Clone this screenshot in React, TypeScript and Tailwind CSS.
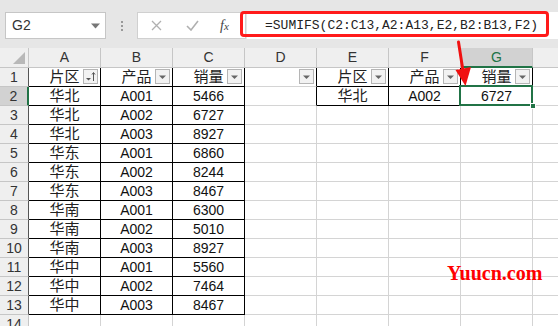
import React from 'react'

const COLS = ['A', 'B', 'C', 'D', 'E', 'F', 'G', '']

const rows: string[][] = [
  ['片区', '产品', '销量', '', '片区', '产品', '销量'],
  ['华北', 'A001', '5466', '', '华北', 'A002', '6727'],
  ['华北', 'A002', '6727'],
  ['华北', 'A003', '8927'],
  ['华东', 'A001', '6860'],
  ['华东', 'A002', '8244'],
  ['华东', 'A003', '8467'],
  ['华南', 'A001', '6300'],
  ['华南', 'A002', '5010'],
  ['华南', 'A003', '8927'],
  ['华中', 'A001', '5560'],
  ['华中', 'A002', '7464'],
  ['华中', 'A003', '8467'],
  [],
  [],
]

const inTable = (r: number, c: number) =>
  (r >= 1 && r <= 13 && c <= 2) || (r >= 1 && r <= 2 && c >= 4 && c <= 6)

function FilterButton({ sorted }: { sorted?: boolean }) {
  return (
    <div className="absolute right-[2px] top-[1px] flex h-[15px] w-[15px] items-center justify-center border border-[#b5b5b5] bg-[#f2f2f2]">
      {sorted ? (
        <svg width="13" height="13" viewBox="0 0 13 13">
          <path d="M2 8h5l-2.5 2.5z" fill="#555" />
          <path d="M9.5 11V3M8 4.5l1.5-2 1.5 2" stroke="#555" strokeWidth="1" fill="none" />
        </svg>
      ) : (
        <svg width="9" height="6" viewBox="0 0 9 6">
          <path d="M1 1.5h7l-3.5 3.5z" fill="#666" />
        </svg>
      )}
    </div>
  )
}

function Cell({ r, c, value }: { r: number; c: number; value?: string }) {
  const right = inTable(r, c) || (c === 3 && r >= 1 && r <= 2)
  const bottom = inTable(r, c)
  const cjk = value !== undefined && /[\u4e00-\u9fff]/.test(value)
  const selected = r === 2 && c === 6
  return (
    <div
      className={`relative flex h-full w-[72px] shrink-0 items-center justify-center border-b border-r ${
        right ? 'border-r-black' : 'border-r-[#d4d4d4]'
      } ${bottom ? 'border-b-black' : 'border-b-[#d4d4d4]'} ${selected ? 'z-10' : ''}`}
    >
      {value && (
        <span className={cjk ? 'text-[15px] text-[#222]' : 'text-[14px]'}>{value}</span>
      )}
      {r === 1 && c <= 6 && <FilterButton sorted={c === 0} />}
      {selected && (
        <>
          <div className="absolute -left-[2px] -top-[2px] h-[21px] w-[74px] border-2 border-[#217346]" />
          <div className="absolute -bottom-[4px] -right-[4px] h-[6px] w-[6px] border border-white bg-[#217346]" />
        </>
      )}
    </div>
  )
}

export default function App() {
  return (
    <div
      className="relative h-[326px] w-[558px] overflow-hidden bg-white text-[#111]"
      style={{ fontFamily: '"Liberation Sans", "Noto Sans CJK SC", sans-serif' }}
    >
      {/* formula bar */}
      <div className="flex h-[48px] items-start bg-[#e6e6e6] pt-[12px]">
        <div className="ml-[5px] flex h-[27px] w-[101px] items-center justify-between border border-[#c6c6c6] bg-white pl-[6px] pr-[5px]">
          <span className="text-[14px] text-[#333]">G2</span>
          <svg width="9" height="6" viewBox="0 0 9 6">
            <path d="M0 0.5h9l-4.5 5z" fill="#777" />
          </svg>
        </div>
        <div className="flex h-[27px] w-[31px] flex-col items-center justify-center gap-[2px]">
          <span className="h-[2px] w-[2px] bg-[#999]" />
          <span className="h-[2px] w-[2px] bg-[#999]" />
          <span className="h-[2px] w-[2px] bg-[#999]" />
        </div>
        <div className="flex h-[27px] w-[109px] items-center border border-[#d0d0d0] bg-white">
          <svg className="ml-[13px]" width="11" height="11" viewBox="0 0 11 11">
            <path d="M1 1l9 9M10 1l-9 9" stroke="#b0b0b0" strokeWidth="1.3" />
          </svg>
          <svg className="ml-[24px]" width="13" height="11" viewBox="0 0 13 11">
            <path d="M1 6l4 4 7-9" stroke="#b0b0b0" strokeWidth="1.6" fill="none" />
          </svg>
          <span
            className="ml-[21px] text-[14px] italic text-[#444]"
            style={{ fontFamily: '"Liberation Serif", serif' }}
          >
            f<span className="text-[11px]">x</span>
          </span>
        </div>
        <div className="ml-[1px] flex h-[27px] flex-1 items-center bg-white pl-[18px]">
          <span
            className="text-[13px] text-[#222]"
            style={{ fontFamily: '"Liberation Mono", monospace' }}
          >
            =SUMIFS(C2:C13,A2:A13,E2,B2:B13,F2)
          </span>
        </div>
      </div>

      {/* column headers */}
      <div className="flex h-[20px] bg-[#efefef]">
        <div className="relative h-full w-[29px] shrink-0 border-b border-r border-[#c6c6c6]">
          <svg className="absolute bottom-[3px] right-[3px]" width="12" height="12" viewBox="0 0 12 12">
            <path d="M12 0v12H0z" fill="#b8b8b8" />
          </svg>
        </div>
        {COLS.map((col, i) => (
          <div
            key={i}
            className={`flex h-full w-[72px] shrink-0 items-center justify-center border-r border-[#c6c6c6] text-[14px] ${
              col === 'G'
                ? 'border-b-2 border-b-[#217346] bg-[#d2d2d2] text-[#217346]'
                : 'border-b text-[#333]'
            }`}
          >
            {col}
          </div>
        ))}
      </div>

      {/* grid */}
      {rows.map((cells, r) => (
        <div key={r} className="flex h-[19px]">
          <div
            className={`flex h-full w-[29px] shrink-0 items-center justify-center border-b border-[#c6c6c6] text-[14px] text-[#333] ${
              r === 1
                ? 'border-r-2 border-r-[#217346] bg-[#d2d2d2]'
                : r <= 12
                  ? 'border-r border-r-[#555] bg-[#efefef]'
                  : 'border-r bg-[#efefef]'
            }`}
          >
            {r + 1}
          </div>
          {COLS.map((_, c) => (
            <Cell key={c} r={r + 1} c={c} value={cells[c]} />
          ))}
        </div>
      ))}

      {/* red callout */}
      <div className="pointer-events-none absolute left-[240px] top-[11px] z-20 h-[26px] w-[309px] rounded-[4px] border-[3px] border-[#ff1a1a]" />
      <svg className="pointer-events-none absolute left-0 top-0 z-20" width="558" height="326">
        <path d="M458.5 42 L463 71" stroke="#f01010" strokeWidth="3" strokeLinecap="round" />
        <path d="M455.5 70 L471 67 L465.5 86 Z" fill="#f01010" />
      </svg>

      <div
        className="absolute left-[447px] top-[258px] z-20 text-[20px] font-bold text-[#ff0000]"
        style={{ fontFamily: '"Liberation Serif", serif' }}
      >
        Yuucn.com
      </div>
    </div>
  )
}
